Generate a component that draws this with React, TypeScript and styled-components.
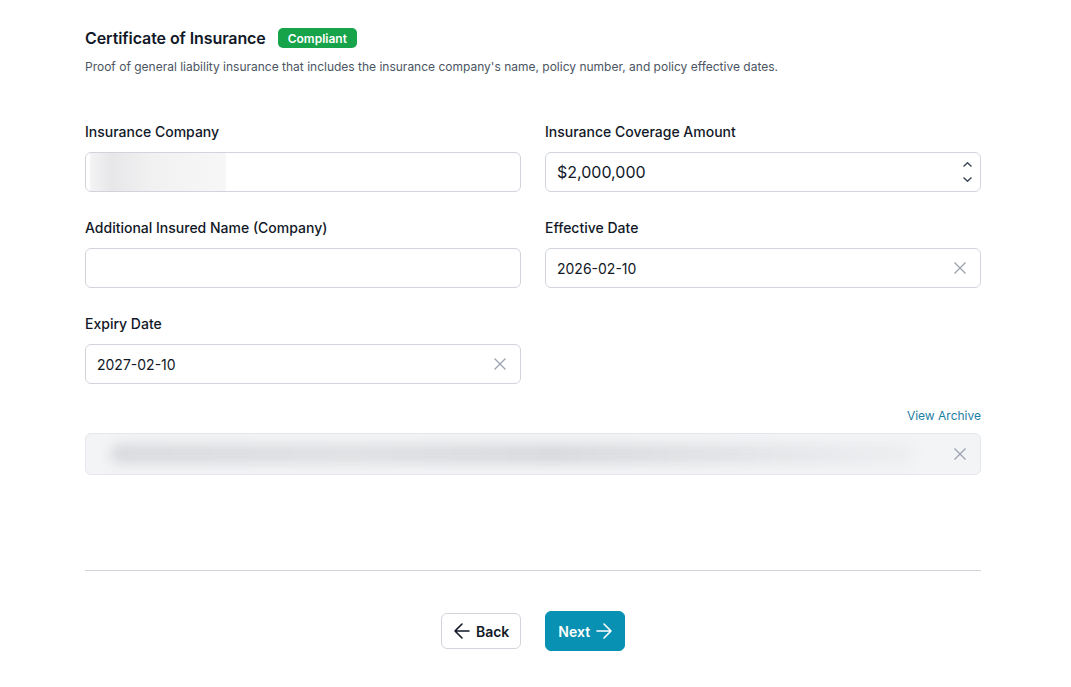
import React from "react";
import styled, { createGlobalStyle } from "styled-components";

const GlobalStyle = createGlobalStyle`
  body {
    margin: 0;
    background: #ffffff;
    font-family: Inter, "Noto Sans", sans-serif;
    color: #111827;
  }
`;

const Page = styled.div`
  width: 896px;
  margin-left: 85px;
  padding-top: 26px;
`;

const TitleRow = styled.div`
  display: flex;
  align-items: center;
  gap: 12px;
  height: 24px;
`;

const Title = styled.h2`
  margin: 0;
  font-size: 16px;
  font-weight: 600;
  letter-spacing: -0.08px;
  color: #111827;
`;

const Badge = styled.span`
  display: inline-flex;
  align-items: center;
  height: 20px;
  padding: 0 10px;
  border-radius: 5px;
  background: #16a34a;
  color: #fff;
  font-size: 12px;
  font-weight: 600;
`;

const Description = styled.p`
  margin: 8px 0 0;
  font-size: 12px;
  line-height: 18px;
  color: #4b5563;
`;

const Grid = styled.div`
  display: grid;
  grid-template-columns: 1fr 1fr;
  column-gap: 24px;
  row-gap: 26px;
  margin-top: 46px;
`;

const Field = styled.div`
  display: flex;
  flex-direction: column;
  gap: 10px;
`;

const Label = styled.label`
  font-size: 14px;
  line-height: 20px;
  font-weight: 500;
  color: #111827;
`;

const InputBox = styled.div`
  display: flex;
  align-items: center;
  height: 40px;
  box-sizing: border-box;
  border: 1px solid #d1d5db;
  border-radius: 6px;
  padding: 0 14px 0 11px;
  background: #fff;
  position: relative;
  overflow: hidden;
`;

const Value = styled.span<{ $large?: boolean }>`
  flex: 1;
  font-size: ${(p) => (p.$large ? "16px" : "14px")};
  color: #111827;
`;

const Redacted = styled.div`
  position: absolute;
  left: 4px;
  top: 0;
  bottom: 0;
  width: 136px;
  background: linear-gradient(90deg, #f4f4f5 0%, #e7e7e9 15%, #f1f1f2 45%, #f7f7f8 100%);
`;

const Spin = styled.div`
  display: flex;
  flex-direction: column;
  align-items: center;
  gap: 10px;
  margin-right: -6px;
  color: #374151;
`;

const ClearBtn = styled.span`
  display: flex;
  color: #9ca3af;
`;

const ArchiveRow = styled.div`
  display: flex;
  justify-content: flex-end;
  margin-top: 24px;
`;

const ArchiveLink = styled.a`
  font-size: 12px;
  color: #1d7ea3;
  text-decoration: none;
  line-height: 16px;
`;

const FileBar = styled.div`
  display: flex;
  align-items: center;
  height: 42px;
  box-sizing: border-box;
  margin-top: 9px;
  border: 1px solid #e5e7eb;
  border-radius: 6px;
  background: #f3f4f6;
  padding: 0 14px 0 24px;
  overflow: hidden;
`;

const Blur = styled.div`
  flex: 1;
  height: 20px;
  margin-right: 40px;
  border-radius: 10px;
  background: linear-gradient(90deg, #d9dadd 0%, #dfe0e3 30%, #d8d9dc 55%, #e1e2e5 75%, #eceef0 100%);
  filter: blur(6px);
`;

const Divider = styled.hr`
  margin: 95px 0 0;
  border: none;
  border-top: 1px solid #d1d5db;
`;

const Actions = styled.div`
  display: flex;
  justify-content: center;
  align-items: center;
  gap: 24px;
  margin-top: 40px;
`;

const Button = styled.button<{ $primary?: boolean }>`
  display: inline-flex;
  align-items: center;
  gap: 2px;
  font-family: Inter, sans-serif;
  font-size: 14px;
  font-weight: 600;
  border-radius: 6px;
  cursor: pointer;
  box-sizing: border-box;
  height: ${(p) => (p.$primary ? "40px" : "36px")};
  padding: ${(p) => (p.$primary ? "0 8px 0 12px" : "0 11px 0 8px")};
  border: 1px solid ${(p) => (p.$primary ? "#0891b2" : "#d1d5db")};
  background: ${(p) => (p.$primary ? "#0891b2" : "#fff")};
  color: ${(p) => (p.$primary ? "#fff" : "#111827")};
`;

const XIcon = () => (
  <svg width="12" height="12" viewBox="0 0 12 12" fill="none" stroke="currentColor" strokeWidth="1.3">
    <path d="M0.5 0.5l11 11M11.5 0.5L0.5 11.5" />
  </svg>
);

const Chevron = ({ up }: { up?: boolean }) => (
  <svg width="9" height="5" viewBox="0 0 9 5" fill="none" stroke="currentColor" strokeWidth="1.3">
    <path d={up ? "M0.5 4.5L4.5 0.7L8.5 4.5" : "M0.5 0.5L4.5 4.3L8.5 0.5"} />
  </svg>
);

const Arrow = ({ left }: { left?: boolean }) => (
  <svg width="24" height="24" viewBox="0 0 24 24" fill="none" stroke="currentColor" strokeWidth="1.6" strokeLinecap="round" strokeLinejoin="round">
    {left ? <path d="M19 12H5M12 19l-7-7 7-7" /> : <path d="M5 12h14M12 5l7 7-7 7" />}
  </svg>
);

const App = () => {
  return (
    <>
      <GlobalStyle />
      <Page>
        <TitleRow>
          <Title>Certificate of Insurance</Title>
          <Badge>Compliant</Badge>
        </TitleRow>
        <Description>
          Proof of general liability insurance that includes the insurance company's name, policy number, and policy effective dates.
        </Description>

        <Grid>
          <Field>
            <Label>Insurance Company</Label>
            <InputBox>
              <Redacted />
            </InputBox>
          </Field>
          <Field>
            <Label>Insurance Coverage Amount</Label>
            <InputBox>
              <Value $large>$2,000,000</Value>
              <Spin>
                <Chevron up />
                <Chevron />
              </Spin>
            </InputBox>
          </Field>
          <Field>
            <Label>Additional Insured Name (Company)</Label>
            <InputBox />
          </Field>
          <Field>
            <Label>Effective Date</Label>
            <InputBox>
              <Value>2026-02-10</Value>
              <ClearBtn><XIcon /></ClearBtn>
            </InputBox>
          </Field>
          <Field>
            <Label>Expiry Date</Label>
            <InputBox>
              <Value>2027-02-10</Value>
              <ClearBtn><XIcon /></ClearBtn>
            </InputBox>
          </Field>
        </Grid>

        <ArchiveRow>
          <ArchiveLink href="#">View Archive</ArchiveLink>
        </ArchiveRow>
        <FileBar>
          <Blur />
          <ClearBtn><XIcon /></ClearBtn>
        </FileBar>

        <Divider />

        <Actions>
          <Button>
            <Arrow left />
            Back
          </Button>
          <Button $primary>
            Next
            <Arrow />
          </Button>
        </Actions>
      </Page>
    </>
  );
};

export default App;
